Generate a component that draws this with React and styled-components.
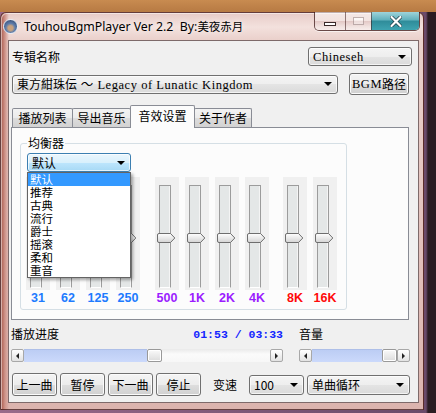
import styled, { createGlobalStyle } from "styled-components";

const CJK = `"Noto Sans CJK SC", "Noto Sans", sans-serif`;

const GlobalStyle = createGlobalStyle`
  html, body { margin: 0; padding: 0; }
  body {
    width: 436px;
    height: 413px;
    overflow: hidden;
    font-family: ${CJK};
    font-size: 12px;
    color: #000;
  }
  * { box-sizing: border-box; }
`;

const Desktop = styled.div`
  width: 436px;
  height: 413px;
  padding-top: 12px;
  overflow: hidden;
  background:
    linear-gradient(180deg, #c88b50 0, #b77a43 12px, rgba(0, 0, 0, 0) 12px),
    linear-gradient(90deg, #9a6a8a 0, #6a4a6a 426px, #2a1c22 428px, #2a1c22 100%);
`;

const Window = styled.div`
  width: 424px;
  height: 398px;
  display: flex;
  flex-direction: column;
  border: 1px solid rgba(70, 30, 30, 0.8);
  border-radius: 6px 6px 0 0;
  background:
    linear-gradient(90deg, #a85a4c 0, #cf948a 4px, rgba(0, 0, 0, 0) 8px),
    linear-gradient(180deg, #e7cbc7 0, #f3e1dd 14px, #ead0cb 27px, #e2c0bb 60%, #dcb4ae 100%);
  box-shadow: inset 1px 1px 0 rgba(255, 255, 255, 0.5);
`;

const TitleBar = styled.div`
  height: 27px;
  display: flex;
  align-items: center;
`;

const AppIcon = styled.div`
  width: 15px;
  height: 15px;
  margin-left: 2px;
  border-radius: 50%;
  border: 1px solid #e8eef6;
  background: radial-gradient(circle at 50% 62%, #c9a27e 0 22%, #5d7cab 45%, #2b3a5c 100%);
`;

const Title = styled.div`
  margin-left: 6px;
  font-family: "Noto Sans", "Noto Sans CJK SC", sans-serif;
  font-size: 12.3px;
  line-height: 16px;
  white-space: pre;
  text-shadow: 0 0 6px rgba(255, 255, 255, 0.9);
`;

const TitleCjk = styled.span`
  font-size: 11.5px;
`;

const Controls = styled.div`
  display: flex;
  align-self: flex-start;
  height: 19px;
  margin: -1px 3px 0 auto;
  border: 1px solid rgba(60, 25, 25, 0.75);
  border-top: none;
  border-radius: 0 0 5px 5px;
  overflow: hidden;
  box-shadow: 0 1px 0 rgba(255, 255, 255, 0.6);
`;

const CtrlBtn = styled.div`
  width: ${(p) => p.$w}px;
  display: flex;
  align-items: center;
  justify-content: center;
  border-left: ${(p) => (p.$first ? "none" : "1px solid rgba(60, 25, 25, 0.55)")};
  background: ${(p) =>
    p.$close
      ? "linear-gradient(180deg, #9fd3da 0, #5fb0bc 45%, #2f8c9a 50%, #3ea3b0 100%)"
      : "linear-gradient(180deg, rgba(255,255,255,0.6) 0, rgba(255,255,255,0.3) 50%, rgba(190,150,150,0.25) 50%, rgba(255,255,255,0.45) 100%)"};
`;

const MinGlyph = styled.div`
  width: 12px;
  height: 4px;
  margin-top: 6px;
  background: #fff;
  border: 1px solid #3a2a2a;
`;

const MaxGlyph = styled.div`
  width: 11px;
  height: 8px;
  border: 1px solid rgba(90, 60, 60, 0.35);
  background: rgba(255, 255, 255, 0.35);
  box-shadow: inset 0 2px 0 rgba(255, 255, 255, 0.6);
`;

const Client = styled.div`
  margin: 0 4px 0 7px;
  height: 363px;
  background: #f0f0f0;
  border: 1px solid #7e6a6a;
  display: flex;
  flex-direction: column;
`;

const Row = styled.div`
  display: flex;
  align-items: center;
  height: ${(p) => p.$h}px;
  margin-top: ${(p) => p.$mt}px;
  padding-left: 3px;
`;

const Label = styled.span`
  font-size: 12px;
  line-height: 14px;
  margin-left: ${(p) => p.$ml || 0}px;
`;

const Select = styled.div`
  display: flex;
  align-items: center;
  width: ${(p) => p.$w}px;
  height: ${(p) => p.$h || 19}px;
  margin-left: ${(p) => (p.$auto ? "auto" : `${p.$ml || 0}px`)};
  margin-right: ${(p) => p.$mr || 0}px;
  padding: 0 5px 0 4px;
  border: 1px solid ${(p) => (p.$focus ? "#3c7fb1" : "#707070")};
  border-radius: 3px;
  background: ${(p) =>
    p.$focus
      ? "linear-gradient(180deg, #eaf6fd 0%, #d9f0fc 50%, #bee6fd 50%, #a7d9f5 100%)"
      : "linear-gradient(180deg, #f4f4f4 0%, #eeeeee 50%, #e4e4e4 50%, #dadada 100%)"};
  box-shadow: inset 0 0 0 1px rgba(255, 255, 255, 0.7);
  font-size: 12px;
  line-height: 15px;
  white-space: nowrap;
  position: relative;
`;

const SelectText = styled.span`
  flex: 1;
  min-width: 0;
`;

const SerifText = styled.span`
  font-family: "Liberation Serif", ${CJK};
  font-size: 12.5px;
  letter-spacing: 0.55px;
`;

const Caret = styled.span`
  flex: none;
  width: 0;
  height: 0;
  border-left: 4px solid transparent;
  border-right: 4px solid transparent;
  border-top: 4px solid #000;
  margin-left: 4px;
`;

const Button = styled.div`
  display: flex;
  align-items: center;
  justify-content: center;
  width: ${(p) => p.$w}px;
  height: ${(p) => p.$h || 23}px;
  margin-left: ${(p) => p.$ml || 0}px;
  border: 1px solid #707070;
  border-radius: 3px;
  background: linear-gradient(180deg, #f4f4f4 0%, #ececec 50%, #dedede 50%, #d0d0d0 100%);
  box-shadow: inset 0 0 0 1px #fbfbfb;
  font-size: 12px;
  line-height: 14px;
`;

const TabArea = styled.div`
  margin: 10px 0 0 2px;
  width: 398px;
`;

const TabStrip = styled.div`
  display: flex;
  align-items: flex-end;
  height: 22px;
  padding-left: 1px;
`;

const Tab = styled.div`
  width: ${(p) => p.$w}px;
  height: ${(p) => (p.$active ? 23 : 19)}px;
  margin-bottom: ${(p) => (p.$active ? -1 : 0)}px;
  margin-left: ${(p) => (p.$first ? 0 : -1)}px;
  display: flex;
  align-items: center;
  justify-content: center;
  padding-bottom: ${(p) => (p.$active ? 2 : 0)}px;
  border: 1px solid #898c95;
  border-bottom: none;
  border-radius: 2px 2px 0 0;
  background: ${(p) =>
    p.$active ? "#fcfcfc" : "linear-gradient(180deg, #f3f3f3 0%, #ebebeb 50%, #dddddd 50%, #d2d2d2 100%)"};
  position: relative;
  z-index: ${(p) => (p.$active ? 1 : 0)};
  font-size: 12px;
  line-height: 14px;
`;

const Panel = styled.div`
  height: 193px;
  border: 1px solid #898c95;
  background: #fcfcfc;
  padding: 15px 0 0 8px;
`;

const Group = styled.div`
  position: relative;
  width: 327px;
  height: 167px;
  border: 1px solid #d5dfe5;
  border-radius: 3px;
  padding: 9px 0 0 5px;
`;

const GroupLabel = styled.span`
  position: absolute;
  top: -8px;
  left: 6px;
  padding: 0 1px;
  background: #fcfcfc;
  font-size: 12px;
  line-height: 14px;
`;

const EqSelectWrap = styled.div`
  position: relative;
  width: 104px;
  margin-left: 1px;
  z-index: 2;
`;

const DropList = styled.ul`
  position: absolute;
  top: 19px;
  left: 0;
  width: 104px;
  height: 106px;
  margin: 0;
  padding: 0;
  list-style: none;
  border: 1px solid #646464;
  background: #fff;
  box-shadow: 2px 2px 3px rgba(0, 0, 0, 0.35);
`;

const DropItem = styled.li`
  height: 13px;
  padding-left: 2px;
  font-size: 11.5px;
  line-height: 13px;
  background: ${(p) => (p.$sel ? "#3399ff" : "transparent")};
  color: ${(p) => (p.$sel ? "#fff" : "#000")};
`;

const SliderRow = styled.div`
  display: flex;
  margin-top: 5px;
`;

const SliderCol = styled.div`
  display: flex;
  flex-direction: column;
  align-items: center;
  width: 24px;
  margin-left: ${(p) => p.$ml}px;
`;

const SliderBox = styled.div`
  position: relative;
  width: 24px;
  height: 113px;
  background: #f0f0f0;
  padding: 8px 8px 2px 4px;
`;

const Track = styled.div`
  height: 100%;
  border: 1px solid #9c9c9c;
  border-bottom-color: #fff;
  background: #e4e7e7;
  box-shadow: inset -1px 0 0 #f4f4f4;
`;

const ThumbSvg = styled.svg`
  position: absolute;
  left: 2px;
  top: 56px;
`;

const FreqLabel = styled.span`
  margin-top: 2px;
  font-family: "Liberation Sans", Arial, sans-serif;
  font-weight: bold;
  font-size: 12.5px;
  line-height: 13px;
  color: ${(p) => p.$color};
`;

const BottomGrid = styled.div`
  display: grid;
  grid-template-columns: 272px 111px;
  column-gap: 16px;
  row-gap: 8px;
  margin-top: 7px;
  padding-left: 2px;
`;

const LabelLine = styled.div`
  display: flex;
  justify-content: space-between;
  align-items: center;
  height: 14px;
`;

const Time = styled.span`
  font-family: "Liberation Mono", monospace;
  font-weight: bold;
  font-size: 11.5px;
  color: #1426ff;
  white-space: pre;
`;

const ScrollBar = styled.div`
  display: flex;
  height: 13px;
`;

const ArrowBtn = styled.div`
  width: 13px;
  height: 13px;
  display: flex;
  align-items: center;
  justify-content: center;
  border: 1px solid #a8a8a8;
  border-radius: 2px;
  background: linear-gradient(180deg, #ffffff, #e2e2e2);
  &::after {
    content: "";
    border-top: 3px solid transparent;
    border-bottom: 3px solid transparent;
    ${(p) => (p.$dir === "left" ? "border-right: 3px solid #222;" : "border-left: 3px solid #222;")}
  }
`;

const Fill = styled.div`
  width: ${(p) => p.$w}px;
  background: linear-gradient(180deg, #bccdf4, #cbd9fb);
  border-top: 1px solid #aebfe8;
`;

const Thumb = styled.div`
  width: 15px;
  border: 1px solid #999;
  border-radius: 2px;
  background: linear-gradient(180deg, #fafafa, #dcdcdc);
  box-shadow: inset 0 0 0 1px #fff;
`;

const Rest = styled.div`
  flex: 1;
  background: linear-gradient(180deg, #e9e9e9, #fbfbfb 40%, #f7f7f7);
`;

const BtnRow = styled.div`
  display: flex;
  align-items: center;
  gap: 3px;
  height: 23px;
  margin-top: 11px;
  padding-left: 3px;
`;

const bands = [
  { f: "31", c: "#1e7bff", ml: 0 },
  { f: "62", c: "#1e7bff", ml: 6 },
  { f: "125", c: "#1e7bff", ml: 6 },
  { f: "250", c: "#1e7bff", ml: 6 },
  { f: "500", c: "#9b1cff", ml: 15 },
  { f: "1K", c: "#9b1cff", ml: 6 },
  { f: "2K", c: "#9b1cff", ml: 6 },
  { f: "4K", c: "#9b1cff", ml: 6 },
  { f: "8K", c: "#ff0a0a", ml: 14 },
  { f: "16K", c: "#ff0a0a", ml: 6 },
];

const presets = ["默认", "推荐", "古典", "流行", "爵士", "摇滚", "柔和", "重音"];

const SliderThumb = () => (
  <ThumbSvg width="19" height="10" viewBox="0 0 19 10">
    <defs>
      <linearGradient id="tg" x1="0" y1="0" x2="0" y2="1">
        <stop offset="0" stopColor="#ffffff" />
        <stop offset="1" stopColor="#d4d4d4" />
      </linearGradient>
    </defs>
    <path d="M0.5 2 Q0.5 0.5 2 0.5 H13.5 L17.8 5 L13.5 9.5 H2 Q0.5 9.5 0.5 8 Z" fill="url(#tg)" stroke="#6e6e6e" />
  </ThumbSvg>
);

const Scroll = ({ fill }) => (
  <ScrollBar>
    <ArrowBtn $dir="left" />
    <Fill $w={fill} />
    <Thumb />
    <Rest />
    <ArrowBtn $dir="right" />
  </ScrollBar>
);

export default function App() {
  return (
    <Desktop>
      <GlobalStyle />
      <Window>
        <TitleBar>
          <AppIcon />
          <Title>
            {"TouhouBgmPlayer Ver 2.2  By:"}
            <TitleCjk>美夜赤月</TitleCjk>
          </Title>
          <Controls>
            <CtrlBtn $w={30} $first>
              <MinGlyph />
            </CtrlBtn>
            <CtrlBtn $w={26}>
              <MaxGlyph />
            </CtrlBtn>
            <CtrlBtn $w={48} $close>
              <svg width="12" height="11" viewBox="0 0 12 11">
                <path d="M1.5 1 L10.5 10 M10.5 1 L1.5 10" stroke="#1d3b44" strokeWidth="3.6" strokeLinecap="round" />
                <path d="M1.5 1 L10.5 10 M10.5 1 L1.5 10" stroke="#fff" strokeWidth="2.2" strokeLinecap="round" />
              </svg>
            </CtrlBtn>
          </Controls>
        </TitleBar>
        <Client>
          <Row $h={19} $mt={6}>
            <Label>专辑名称</Label>
            <Select $w={104} $auto $mr={6}>
              <SelectText>
                <SerifText>Chineseh</SerifText>
              </SelectText>
              <Caret />
            </Select>
          </Row>
          <Row $h={22} $mt={7}>
            <Select $w={326}>
              <SelectText>
                東方紺珠伝<SerifText> ～ Legacy of Lunatic Kingdom</SerifText>
              </SelectText>
              <Caret />
            </Select>
            <Button $w={60} $h={22} $ml={11}>
              <SerifText>BGM</SerifText>路径
            </Button>
          </Row>
          <TabArea>
            <TabStrip>
              <Tab $w={61} $first>播放列表</Tab>
              <Tab $w={59}>导出音乐</Tab>
              <Tab $w={65} $active>音效设置</Tab>
              <Tab $w={58}>关于作者</Tab>
            </TabStrip>
            <Panel>
              <Group>
                <GroupLabel>均衡器</GroupLabel>
                <EqSelectWrap>
                  <Select $w={104} $focus>
                    <SelectText>默认</SelectText>
                    <Caret />
                  </Select>
                  <DropList>
                    {presets.map((p, i) => (
                      <DropItem key={p} $sel={i === 0}>
                        {p}
                      </DropItem>
                    ))}
                  </DropList>
                </EqSelectWrap>
                <SliderRow>
                  {bands.map((b) => (
                    <SliderCol key={b.f} $ml={b.ml}>
                      <SliderBox>
                        <Track />
                        <SliderThumb />
                      </SliderBox>
                      <FreqLabel $color={b.c}>{b.f}</FreqLabel>
                    </SliderCol>
                  ))}
                </SliderRow>
              </Group>
            </Panel>
          </TabArea>
          <BottomGrid>
            <LabelLine>
              <Label>播放进度</Label>
              <Time>01:53 / 03:33</Time>
            </LabelLine>
            <LabelLine>
              <Label>音量</Label>
            </LabelLine>
            <Scroll fill={123} />
            <Scroll fill={71} />
          </BottomGrid>
          <BtnRow>
            <Button $w={45}>上一曲</Button>
            <Button $w={45}>暂停</Button>
            <Button $w={45}>下一曲</Button>
            <Button $w={45}>停止</Button>
            <Label $ml={9}>变速</Label>
            <Select $w={55} $h={20} $ml={9}>
              <SelectText>100</SelectText>
              <Caret />
            </Select>
            <Select $w={103} $h={20}>
              <SelectText>单曲循环</SelectText>
              <Caret />
            </Select>
          </BtnRow>
        </Client>
      </Window>
    </Desktop>
  );
}
